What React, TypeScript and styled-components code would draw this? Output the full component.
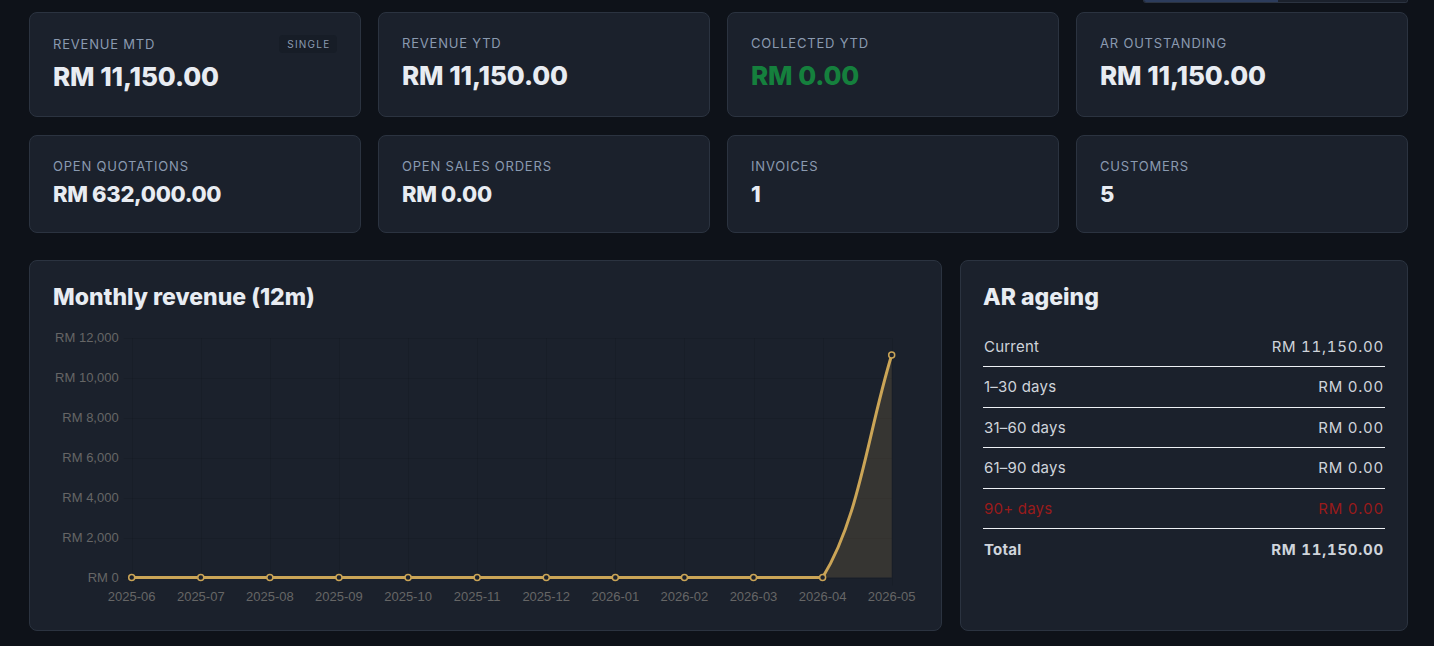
import React from 'react';
import styled, { createGlobalStyle } from 'styled-components';

const GlobalStyle = createGlobalStyle`
  html, body {
    margin: 0;
    padding: 0;
    background-color: #0e1219;
  }
`;

const Page = styled.div`
  font-family: 'Inter', 'Liberation Sans', sans-serif;
  height: 646px;
  overflow: hidden;
  padding: 0 26px 0 29px;
  color: #e6eaf0;
`;

const Toolbar = styled.div`
  display: flex;
  justify-content: flex-end;
  height: 3px;
  margin-bottom: 9px;
`;

const Segmented = styled.div`
  display: flex;
  width: 263px;
  border-radius: 0 0 7px 7px;
  border: 1px solid #2b3340;
  border-top: 0;
  overflow: hidden;
`;

const Segment = styled.div<{ $active?: boolean }>`
  flex: ${(p) => (p.$active ? '0 0 134px' : '1')};
  background-color: ${(p) => (p.$active ? '#2c3c5c' : '#1b212c')};
`;

const CardGrid = styled.div`
  display: grid;
  grid-template-columns: repeat(4, 332px);
  gap: 17px;
  margin-bottom: 18px;
`;

const Card = styled.div<{ $tall?: boolean }>`
  box-sizing: border-box;
  height: ${(p) => (p.$tall ? '105px' : '98px')};
  background-color: #1b212c;
  border: 1px solid #2b3340;
  border-radius: 8px;
  padding: 21px 23px;
`;

const LabelRow = styled.div<{ $hasBadge?: boolean }>`
  display: flex;
  align-items: center;
  justify-content: space-between;
  height: ${(p) => (p.$hasBadge ? '20px' : '18px')};
`;

const Label = styled.div`
  font-size: 13px;
  letter-spacing: 0.8px;
  color: #8a9ab0;
  text-transform: uppercase;
  line-height: 18px;
`;

const Badge = styled.span`
  font-size: 10px;
  letter-spacing: 1.25px;
  line-height: 18px;
  padding: 0 6.5px 0 8px;
  border-radius: 4px;
  background-color: #171d27;
  color: #8a9ab0;
`;

const BigValue = styled.div<{ $tone?: 'good'; $hasBadge?: boolean }>`
  font-size: 26px;
  font-weight: 800;
  letter-spacing: -0.1px;
  line-height: 32px;
  margin-top: ${(p) => (p.$hasBadge ? '7px' : '8px')};
  color: ${(p) => (p.$tone === 'good' ? '#15803d' : '#e8ecf2')};
`;

const SmallValue = styled.div`
  font-size: 22px;
  font-weight: 800;
  letter-spacing: -0.35px;
  line-height: 28px;
  margin-top: 5px;
  color: #e8ecf2;
`;

const PanelGrid = styled.div`
  display: grid;
  grid-template-columns: 913px 448px;
  gap: 18px;
  margin-top: 27px;
`;

const Panel = styled.section<{ $side?: boolean }>`
  box-sizing: border-box;
  height: 371px;
  background-color: #1b212c;
  border: 1px solid #2b3340;
  border-radius: 8px;
  padding: ${(p) => (p.$side ? '22px 22px' : '22px 23px')};
`;

const PanelTitle = styled.h2`
  margin: 0;
  font-size: 23px;
  font-weight: 800;
  letter-spacing: 0;
  line-height: 28px;
  color: #e8ecf2;
`;

const ChartSvg = styled.svg`
  display: block;
  margin: 17px 0 0 -23px;
`;

const AgeTable = styled.div`
  margin-top: 15.5px;
`;

const AgeRow = styled.div<{ $tone?: 'danger'; $total?: boolean; $last?: boolean }>`
  box-sizing: border-box;
  display: flex;
  justify-content: space-between;
  align-items: center;
  height: 40.5px;
  padding: 0 1px;
  font-size: 15px;
  letter-spacing: 0.22px;
  font-weight: ${(p) => (p.$total ? 700 : 400)};
  color: ${(p) => (p.$tone === 'danger' ? '#991b1b' : '#cfd4db')};
  border-bottom: ${(p) => (p.$last ? '0' : '1px solid #eef1f5')};
`;

const AgeAmount = styled.span`
  font-variant-numeric: tabular-nums;
  letter-spacing: 0.75px;
`;

const topCards = [
  { label: 'Revenue MTD', value: 'RM 11,150.00', badge: 'SINGLE' },
  { label: 'Revenue YTD', value: 'RM 11,150.00' },
  { label: 'Collected YTD', value: 'RM 0.00', tone: 'good' as const },
  { label: 'AR Outstanding', value: 'RM 11,150.00' },
];

const lowerCards = [
  { label: 'Open Quotations', value: 'RM 632,000.00' },
  { label: 'Open Sales Orders', value: 'RM 0.00' },
  { label: 'Invoices', value: '1' },
  { label: 'Customers', value: '5' },
];

const ageing = [
  { label: 'Current', value: 'RM 11,150.00' },
  { label: '1–30 days', value: 'RM 0.00' },
  { label: '31–60 days', value: 'RM 0.00' },
  { label: '61–90 days', value: 'RM 0.00' },
  { label: '90+ days', value: 'RM 0.00', tone: 'danger' as const },
];

const months = [
  '2025-06', '2025-07', '2025-08', '2025-09', '2025-10', '2025-11',
  '2025-12', '2026-01', '2026-02', '2026-03', '2026-04', '2026-05',
];

const yTicks = ['RM 12,000', 'RM 10,000', 'RM 8,000', 'RM 6,000', 'RM 4,000', 'RM 2,000', 'RM 0'];

// chart coords are relative to the svg
const X0 = 101.7;
const STEP = 69.09;
const BASE = 249.5;
const TOP = 10;
const xAt = (i: number) => X0 + i * STEP;
const yTick = (i: number) => TOP + ((BASE - TOP) / 6) * i;
const GOLD = '#cba557';

const RevenueChart: React.FC = () => {
  const lastY = BASE - ((BASE - TOP) * 11150) / 12000;
  const x10 = xAt(10);
  const x11 = xAt(11);
  const curve = `C ${x10 + 37} ${BASE - 60} ${x11 - 24} ${lastY + 78} ${x11} ${lastY}`;

  return (
    <ChartSvg width={912} height={286} viewBox="0 0 912 286">
      {yTicks.map((t, i) => (
        <g key={t}>
          <line
            x1={X0 - 8}
            x2={x11}
            y1={Math.round(yTick(i)) + 0.5}
            y2={Math.round(yTick(i)) + 0.5}
            stroke="rgba(0,0,0,0.08)"
          />
          <text x={X0 - 13} y={yTick(i) + 4} textAnchor="end" fontFamily="Liberation Sans" fontSize={13} fill="#666">
            {t}
          </text>
        </g>
      ))}
      {months.map((m, i) => (
        <g key={m}>
          <line
            x1={Math.round(xAt(i)) + 0.5}
            x2={Math.round(xAt(i)) + 0.5}
            y1={TOP}
            y2={BASE + 8}
            stroke="rgba(0,0,0,0.08)"
          />
          <text x={xAt(i)} y={BASE + 23} textAnchor="middle" fontFamily="Liberation Sans" fontSize={13} fill="#666">
            {m}
          </text>
        </g>
      ))}
      <path d={`M ${x10} ${BASE} ${curve} L ${x11} ${BASE} Z`} fill="rgba(212,165,90,0.15)" />
      <path d={`M ${X0} ${BASE} L ${x10} ${BASE} ${curve}`} fill="none" stroke={GOLD} strokeWidth={3} />
      {months.map((m, i) => (
        <circle
          key={m}
          cx={xAt(i)}
          cy={i === 11 ? lastY : BASE}
          r={3}
          fill="#1b212c"
          stroke={GOLD}
          strokeWidth={1.5}
        />
      ))}
    </ChartSvg>
  );
};

export default function App() {
  return (
    <Page>
      <GlobalStyle />
      <Toolbar>
        <Segmented>
          <Segment $active />
          <Segment />
        </Segmented>
      </Toolbar>

      <CardGrid>
        {topCards.map((c) => (
          <Card key={c.label} $tall>
            <LabelRow $hasBadge={!!c.badge}>
              <Label>{c.label}</Label>
              {c.badge && <Badge>{c.badge}</Badge>}
            </LabelRow>
            <BigValue $tone={c.tone} $hasBadge={!!c.badge}>{c.value}</BigValue>
          </Card>
        ))}
      </CardGrid>

      <CardGrid>
        {lowerCards.map((c) => (
          <Card key={c.label}>
            <LabelRow>
              <Label>{c.label}</Label>
            </LabelRow>
            <SmallValue>{c.value}</SmallValue>
          </Card>
        ))}
      </CardGrid>

      <PanelGrid>
        <Panel>
          <PanelTitle>Monthly revenue (12m)</PanelTitle>
          <RevenueChart />
        </Panel>
        <Panel $side>
          <PanelTitle>AR ageing</PanelTitle>
          <AgeTable>
            {ageing.map((r) => (
              <AgeRow key={r.label} $tone={r.tone}>
                <span>{r.label}</span>
                <AgeAmount>{r.value}</AgeAmount>
              </AgeRow>
            ))}
            <AgeRow $total $last>
              <span>Total</span>
              <AgeAmount>RM 11,150.00</AgeAmount>
            </AgeRow>
          </AgeTable>
        </Panel>
      </PanelGrid>
    </Page>
  );
}
